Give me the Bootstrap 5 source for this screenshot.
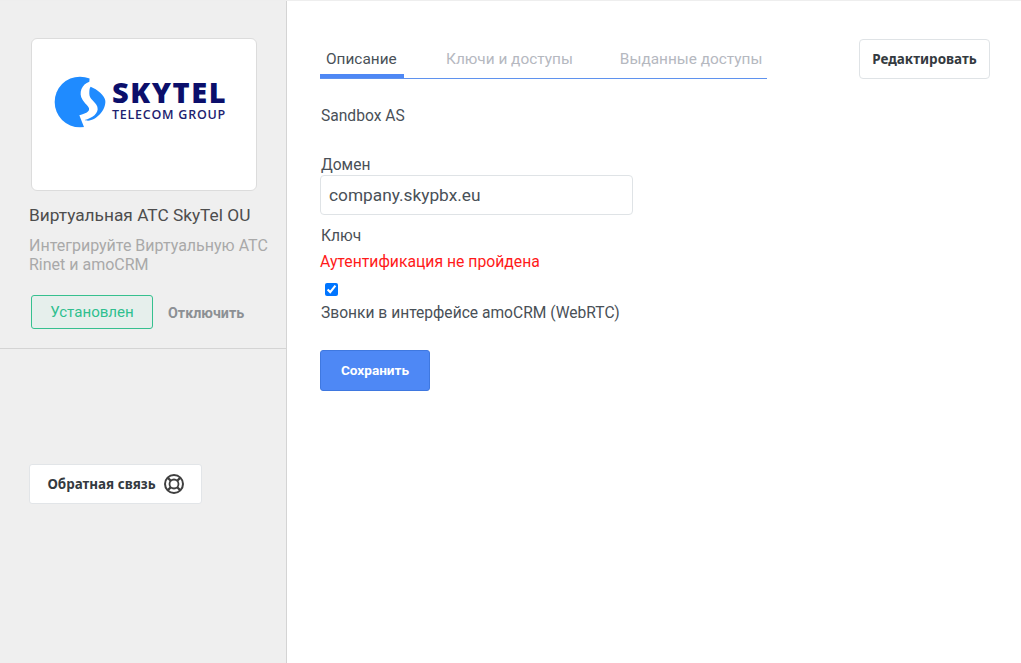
<!DOCTYPE html>
<html lang="ru">
<head>
  <meta charset="UTF-8">
  <meta name="viewport" content="width=device-width, initial-scale=1.0">
  <title>Виртуальная АТС SkyTel OU</title>
  <link href="https://cdn.jsdelivr.net/npm/bootstrap@5.3.3/dist/css/bootstrap.min.css" rel="stylesheet">
  <style>
    html, body { height: 100%; }
    body {
      font-family: Roboto, sans-serif;
      font-size: 15.6px;
      color: #495057;
      overflow: hidden;
    }
    .page-wrap { height: 663px; border-top: 1px solid #eee; }
    .side-panel {
      width: 287px;
      flex: none;
      background: #efefef;
      border-right: 1px solid #d4d4d4;
    }
    .side-top {
      height: 348px;
      padding: 37px 18px 0 29px;
      border-bottom: 1px solid #d4d4d4;
    }
    .logo-box {
      width: 226px;
      height: 153px;
      margin-left: 2px;
      padding: 31px 0 0 18px;
      background: #fff;
      border: 1px solid #dcdcdc;
      border-radius: 6px;
    }
    .logo-mark { flex: none; }
    .logo-text { margin: 9px 0 0 2px; }
    .logo-name {
      font-family: "Open Sans", sans-serif;
      font-weight: 800;
      font-size: 29px;
      line-height: 26px;
      letter-spacing: 1.55px;
      color: #0b0f6b;
    }
    .logo-sub {
      font-family: "Open Sans", sans-serif;
      font-weight: 600;
      font-size: 12.5px;
      line-height: 16px;
      letter-spacing: .75px;
      color: #1d2270;
      margin-top: 2px;
    }
    .app-title { font-size: 17.3px; line-height: 24px; margin-top: 12px; color: #4d4d4d; }
    .app-desc { font-size: 16px; line-height: 19px; margin-top: 9px; color: #a9a9a9; }
    .status-row { margin-top: 21px; margin-left: 2px; }
    .status-btn {
      width: 122px;
      height: 34px;
      font-size: 15.1px;
      line-height: 32px;
      text-align: center;
      color: #2fbf8f;
      background: #e6efec;
      border: 1px solid #36c08f;
      border-radius: 3px;
    }
    .off-link { font-size: 14.3px; font-weight: 700; color: #8c9094; margin: 3px 0 0 15px; }
    .feedback-btn {
      width: 173px;
      height: 40px;
      margin: 115px 0 0 29px;
      padding: 0;
      background: #fff;
      border: 1px solid #e2e5e8;
      border-radius: 3px;
      font-family: "Noto Sans", sans-serif;
      font-size: 13.4px;
      font-weight: 700;
      color: #343a40;
    }
    .main-panel { padding: 38px 31px 0 33px; }
    .tab-bar { width: 447px; height: 40px; border-bottom: 1px solid #5f92ee; padding-top: 8px; }
    .tab-item { flex: none; font-size: 15.4px; line-height: 24px; color: #b5b8bf; white-space: nowrap; }
    .tab-on { color: #495057; width: 84px; height: 31px; padding-left: 6px; border-bottom: 4px solid #4e88f5; }
    .tab-second { margin-left: 42px; }
    .tab-third { margin-left: 47px; }
    .edit-btn {
      width: 131px;
      height: 40px;
      padding: 0;
      font-family: "Noto Sans", sans-serif;
      font-size: 13.5px;
      font-weight: 700;
      color: #343a40;
      background: #fff;
      border: 1px solid #dfe3e6;
      border-radius: 4px;
    }
    .company-line { line-height: 24px; margin: 25px 0 0 1px; }
    .field-label { line-height: 24px; margin: 25px 0 0 1px; }
    .domain-input {
      width: 313px;
      height: 40px;
      margin-top: -2px;
      padding: 0 8px;
      font-size: 17.3px;
      color: #495057;
      border: 1px solid #dfe3e6;
      border-radius: 4px;
    }
    .key-label { line-height: 24px; margin: 9px 0 0 1px; }
    .auth-error { font-size: 15.75px; line-height: 24px; margin-top: 2px; color: #ff1a1a; }
    .check-line { height: 26px; padding: 9px 0 0 5px; }
    .check-line input { width: 13px; height: 13px; margin: 0; display: block; }
    .call-label { line-height: 22px; margin: 2px 0 0 1px; }
    .save-btn {
      width: 110px;
      height: 41px;
      margin-top: 26px;
      padding: 0;
      font-size: 13.6px;
      font-weight: 700;
      color: #fff;
      background: #4e88f5;
      border: 1px solid #3f78e0;
      border-radius: 3px;
    }
  </style>
</head>
<body>
  <div class="page-wrap d-flex">
    <!-- left panel -->
    <div class="side-panel">
      <div class="side-top">
        <div class="logo-box d-flex">
          <svg class="logo-mark" width="60" height="62" viewBox="0 0 180 186">
            <circle cx="90" cy="96" r="76" fill="#1f8bff"/>
            <path d="M120 10L118 35C96 42 84 68 98 90C108 106 122 112 116 122C110 130 98 132 88 136L104 176H180V10Z" fill="#fff"/>
            <path d="M122 50C142 58 164 76 166 92C168 120 140 150 114 152C110 152 106 151 104 150C126 144 148 130 142 110C136 94 118 88 118 72C118 62 118 54 122 50Z" fill="#1f8bff"/>
          </svg>
          <div class="logo-text">
            <div class="logo-name">SKYTEL</div>
            <div class="logo-sub">TELECOM GROUP</div>
          </div>
        </div>
        <div class="app-title">Виртуальная АТС SkyTel OU</div>
        <div class="app-desc">Интегрируйте Виртуальную АТС Rinet и amoCRM</div>
        <div class="status-row d-flex align-items-center">
          <div class="status-btn">Установлен</div>
          <span class="off-link">Отключить</span>
        </div>
      </div>
      <button type="button" class="feedback-btn d-flex align-items-center justify-content-center gap-2">
        Обратная связь
        <svg width="20" height="20" viewBox="0 0 20 20" fill="none" stroke="#404040">
          <circle cx="10" cy="10" r="9" stroke-width="2"/>
          <circle cx="10" cy="10" r="4.500" stroke-width="1.800"/>
          <path d="M3.500 3.500L7 7M16.500 3.500L13 7M3.500 16.500L7 13M16.500 16.500L13 13" stroke-width="2.400"/>
        </svg>
      </button>
    </div>

    <!-- main content -->
    <div class="main-panel flex-grow-1">
      <div class="d-flex justify-content-between">
        <div class="tab-bar d-flex">
          <div class="tab-item tab-on">Описание</div>
          <div class="tab-item tab-second">Ключи и доступы</div>
          <div class="tab-item tab-third">Выданные доступы</div>
        </div>
        <button type="button" class="edit-btn">Редактировать</button>
      </div>
      <div class="company-line">Sandbox AS</div>
      <div class="field-label">Домен</div>
      <input type="text" class="domain-input d-block" value="company.skypbx.eu">
      <div class="key-label">Ключ</div>
      <div class="auth-error">Аутентификация не пройдена</div>
      <div class="check-line"><input type="checkbox" checked></div>
      <div class="call-label">Звонки в интерфейсе amoCRM (WebRTC)</div>
      <button type="button" class="save-btn">Сохранить</button>
    </div>
  </div>
  <script src="https://cdn.jsdelivr.net/npm/bootstrap@5.3.3/dist/js/bootstrap.bundle.min.js"></script>
</body>
</html>
